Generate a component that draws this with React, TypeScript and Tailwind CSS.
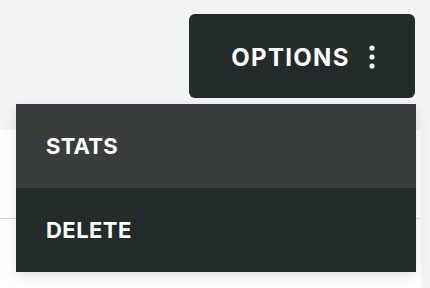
export default function App() {
  const font = { fontFamily: "Inter, 'Noto Sans', sans-serif" };

  return (
    <div
      className="relative flex h-[288px] w-[430px] flex-col overflow-hidden bg-[#f2f3f5]"
      style={font}
    >
      {/* Toolbar */}
      <div className="flex h-[130px] justify-end pr-[15px] pt-[14px]">
        <button className="flex h-[84px] w-[226px] items-center justify-center gap-[19px] rounded-[6px] bg-[#232b2b] pl-[2px] pt-[4px] text-white">
          <span className="text-[24px] font-bold tracking-[0.055em]">OPTIONS</span>
          <svg width="6" height="24" viewBox="0 0 6 24" className="-mt-[3px]">
            <circle cx="3" cy="3" r="2.6" fill="currentColor" />
            <circle cx="3" cy="12" r="2.6" fill="currentColor" />
            <circle cx="3" cy="21" r="2.6" fill="currentColor" />
          </svg>
        </button>
      </div>

      {/* Underlying card */}
      <div className="mr-[9px] flex-1 bg-white">
        <div className="h-[89px] border-b border-[#dcdcdc]" />
      </div>

      {/* Dropdown menu */}
      <div className="absolute left-[16px] top-[104px] w-[400px] shadow-[0_4px_12px_rgba(0,0,0,0.12)]">
        <div className="flex h-[84px] items-center bg-[#393e3c] pl-[30px] text-[22px] font-bold tracking-[0.01em] text-white">
          STATS
        </div>
        <div className="flex h-[84px] items-center bg-[#232b2b] pl-[30px] text-[22px] font-bold tracking-[0.02em] text-white">
          DELETE
        </div>
      </div>
    </div>
  );
}
